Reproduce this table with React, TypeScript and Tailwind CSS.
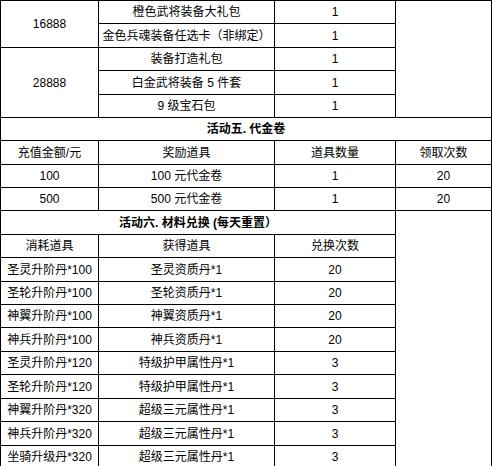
import React from 'react'

const font = { fontFamily: '"Liberation Sans", "Noto Sans CJK SC", sans-serif' }

function Cell({ children, className = '' }: { children?: React.ReactNode; className?: string }) {
  return (
    <div className={`bg-white flex items-center justify-center text-[12px] leading-none text-black whitespace-nowrap ${className}`}>
      {children}
    </div>
  )
}

const exchange = [
  ['圣灵升阶丹*100', '圣灵资质丹*1', '20'],
  ['圣轮升阶丹*100', '圣轮资质丹*1', '20'],
  ['神翼升阶丹*100', '神翼资质丹*1', '20'],
  ['神兵升阶丹*100', '神兵资质丹*1', '20'],
  ['圣灵升阶丹*120', '特级护甲属性丹*1', '3'],
  ['圣轮升阶丹*120', '特级护甲属性丹*1', '3'],
  ['神翼升阶丹*320', '超级三元属性丹*1', '3'],
  ['神兵升阶丹*320', '超级三元属性丹*1', '3'],
  ['坐骑升级丹*320', '超级三元属性丹*1', '3'],
]

export default function App() {
  return (
    <div className="w-[492px] h-[466px] overflow-hidden bg-white" style={font}>
      <div className="grid w-[492px] grid-cols-[97px_175px_120px_95px] grid-rows-[22px_23px_22px_23px_22px_22px_23px_22px_22px_23px_22px_23px_22px_22px_23px_22px_23px_22px_23px_22px] gap-px p-px bg-black">
        {/* 活动四 tail */}
        <Cell className="row-span-2">16888</Cell>
        <Cell>橙色武将装备大礼包</Cell>
        <Cell>1</Cell>
        <Cell className="row-span-5" />
        <Cell>金色兵魂装备任选卡（非绑定）</Cell>
        <Cell>1</Cell>
        <Cell className="row-span-3">28888</Cell>
        <Cell>装备打造礼包</Cell>
        <Cell>1</Cell>
        <Cell>白金武将装备 5 件套</Cell>
        <Cell>1</Cell>
        <Cell>9 级宝石包</Cell>
        <Cell>1</Cell>

        {/* 活动五 */}
        <Cell className="col-span-4 font-bold">活动五. 代金卷</Cell>
        <Cell>充值金额/元</Cell>
        <Cell>奖励道具</Cell>
        <Cell>道具数量</Cell>
        <Cell>领取次数</Cell>
        <Cell>100</Cell>
        <Cell>100 元代金卷</Cell>
        <Cell>1</Cell>
        <Cell>20</Cell>
        <Cell>500</Cell>
        <Cell>500 元代金卷</Cell>
        <Cell>1</Cell>
        <Cell>20</Cell>

        {/* 活动六 */}
        <Cell className="col-span-3 font-bold">活动六. 材料兑换 (每天重置）</Cell>
        <Cell className="row-span-11" />
        <Cell>消耗道具</Cell>
        <Cell>获得道具</Cell>
        <Cell>兑换次数</Cell>
        {exchange.map(([a, b, c], i) => (
          <React.Fragment key={i}>
            <Cell>{a}</Cell>
            <Cell>{b}</Cell>
            <Cell>{c}</Cell>
          </React.Fragment>
        ))}
      </div>
    </div>
  )
}
